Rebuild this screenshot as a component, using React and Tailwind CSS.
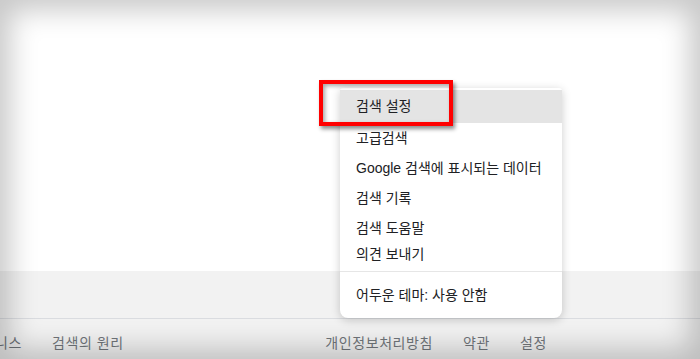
import React from 'react';

const menuItems = [
  { label: '검색 설정', h: 'h-[33px]', active: true },
  { label: '고급검색', h: 'h-[31px]' },
  { label: 'Google 검색에 표시되는 데이터', h: 'h-[29px]' },
  { label: '검색 기록', h: 'h-[30px]' },
  { label: '검색 도움말', h: 'h-[30px]' },
  { label: '의견 보내기', h: 'h-[22px]' },
];

const font = { fontFamily: '"Liberation Sans", Arial, "Noto Sans CJK KR", sans-serif' };

const SettingsMenu = () => (
  <div className="absolute left-[340px] top-[88px] w-[222px] bg-white rounded-t-[3px] rounded-b-lg shadow-[0_2px_10px_rgba(0,0,0,0.2)] pt-[2px] text-[14px] text-[#202124]">
    {menuItems.map(item => (
      <div
        key={item.label}
        className={`${item.h} flex items-center px-4 whitespace-nowrap ${item.active ? 'bg-[#e4e4e4]' : ''}`}
      >
        {item.label}
      </div>
    ))}
    <div className="mt-[6px] border-t border-[#e6e6e6]" />
    <div className="h-[46px] flex items-center px-4">어두운 테마: 사용 안함</div>
  </div>
);

export default function App() {
  return (
    <div className="relative w-[700px] h-[359px] overflow-hidden bg-white" style={font}>
      <div className="flex flex-col h-full">
        <div className="flex-1" />
        <div className="h-[48px] bg-[#f2f2f2] border-b border-[#dadce0]" />
        <div className="h-[40px] pt-[8px] bg-[#f2f2f2] flex items-center justify-between text-[14px] tracking-[0.6px] text-[#70757a] whitespace-nowrap">
          <div className="flex ml-[-47px]">
            <span className="px-[15px]">비즈니스</span>
            <span className="px-[15px]">검색의 원리</span>
          </div>
          <div className="flex mr-[138px]">
            <span className="px-[15px]">개인정보처리방침</span>
            <span className="px-[15px]">약관</span>
            <span className="px-[15px]">설정</span>
          </div>
        </div>
      </div>

      <SettingsMenu />

      {/* red annotation box */}
      <div className="absolute left-[319px] top-[80px] w-[134px] h-[46px] border-4 border-[#ff0000] shadow-[2px_3px_4px_rgba(0,0,0,0.45),inset_2px_2px_4px_rgba(0,0,0,0.35)]" />

      {/* vignette frame */}
      <div className="absolute inset-0 pointer-events-none shadow-[inset_0_0_28px_10px_rgba(0,0,0,0.22)]" />
    </div>
  );
}
